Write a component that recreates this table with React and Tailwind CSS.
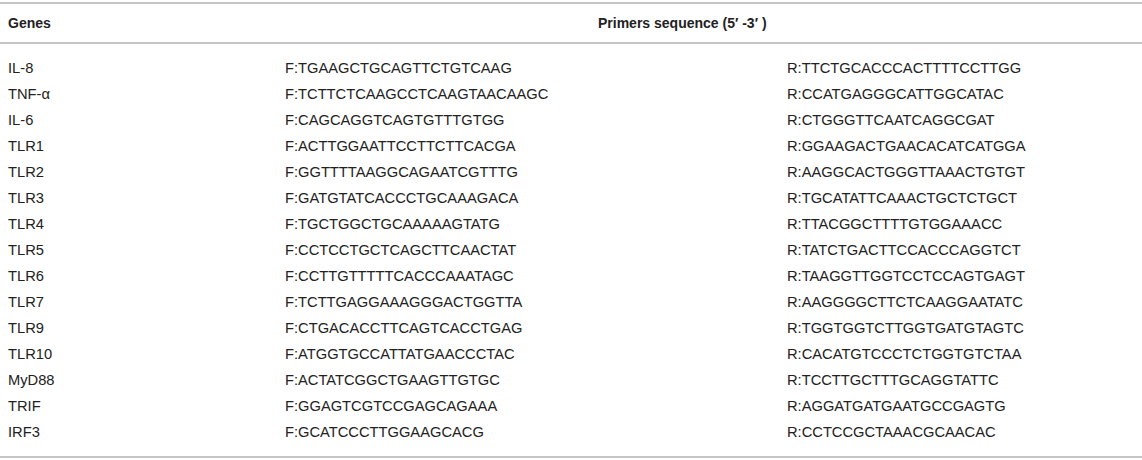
import React from "react";

const rows = [
  ["IL-8", "F:TGAAGCTGCAGTTCTGTCAAG", "R:TTCTGCACCCACTTTTCCTTGG"],
  ["TNF-α", "F:TCTTCTCAAGCCTCAAGTAACAAGC", "R:CCATGAGGGCATTGGCATAC"],
  ["IL-6", "F:CAGCAGGTCAGTGTTTGTGG", "R:CTGGGTTCAATCAGGCGAT"],
  ["TLR1", "F:ACTTGGAATTCCTTCTTCACGA", "R:GGAAGACTGAACACATCATGGA"],
  ["TLR2", "F:GGTTTTAAGGCAGAATCGTTTG", "R:AAGGCACTGGGTTAAACTGTGT"],
  ["TLR3", "F:GATGTATCACCCTGCAAAGACA", "R:TGCATATTCAAACTGCTCTGCT"],
  ["TLR4", "F:TGCTGGCTGCAAAAAGTATG", "R:TTACGGCTTTTGTGGAAACC"],
  ["TLR5", "F:CCTCCTGCTCAGCTTCAACTAT", "R:TATCTGACTTCCACCCAGGTCT"],
  ["TLR6", "F:CCTTGTTTTTCACCCAAATAGC", "R:TAAGGTTGGTCCTCCAGTGAGT"],
  ["TLR7", "F:TCTTGAGGAAAGGGACTGGTTA", "R:AAGGGGCTTCTCAAGGAATATC"],
  ["TLR9", "F:CTGACACCTTCAGTCACCTGAG", "R:TGGTGGTCTTGGTGATGTAGTC"],
  ["TLR10", "F:ATGGTGCCATTATGAACCCTAC", "R:CACATGTCCCTCTGGTGTCTAA"],
  ["MyD88", "F:ACTATCGGCTGAAGTTGTGC", "R:TCCTTGCTTTGCAGGTATTC"],
  ["TRIF", "F:GGAGTCGTCCGAGCAGAAA", "R:AGGATGATGAATGCCGAGTG"],
  ["IRF3", "F:GCATCCCTTGGAAGCACG", "R:CCTCCGCTAAACGCAACAC"],
];

export default function App() {
  return (
    <div
      className="w-[1142px] h-[460px] bg-white pt-[2px] text-[#222] text-[14.7px]"
      style={{ fontFamily: '"Liberation Sans", Arial, sans-serif' }}
    >
      <div className="flex items-center h-[42px] border-t-2 border-b-2 border-[#c6c6c6] font-bold text-[14px]">
        <div className="w-[277px] pl-2">Genes</div>
        <div className="pl-[321px]">Primers sequence (5′ -3′ )</div>
      </div>
      <div className="py-[11px] border-b-2 border-[#c6c6c6]">
        {rows.map((r) => (
          <div key={r[0]} className="flex items-center h-[26px]">
            <div className="w-[285px] pl-2">{r[0]}</div>
            <div className="w-[502px]">{r[1]}</div>
            <div>{r[2]}</div>
          </div>
        ))}
      </div>
    </div>
  );
}
